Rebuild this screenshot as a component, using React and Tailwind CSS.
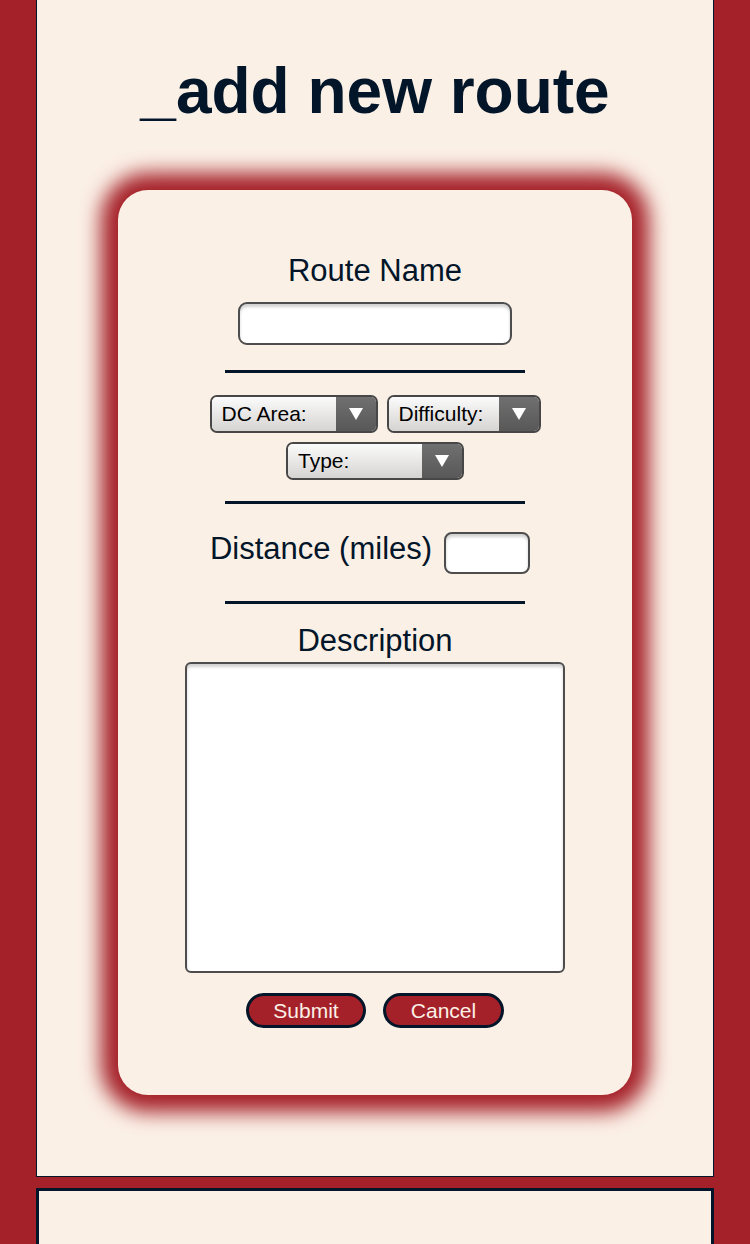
import React from 'react';

const font = { fontFamily: '"Liberation Sans", Arial, sans-serif' };

function Divider() {
  return <div className="w-[300px] h-[3px] bg-[#021529] mx-auto" />;
}

function FakeSelect({ label, width }) {
  return (
    <div
      className={`flex h-[38px] rounded-[7px] border-2 border-[#474747] overflow-hidden ${width}`}
    >
      <div className="flex-1 flex items-center pl-[10px] text-[21px] text-black bg-gradient-to-b from-[#fbfbfb] to-[#d6d4d2]">
        {label}
      </div>
      <div className="w-[40px] flex items-center justify-center bg-gradient-to-b from-[#707070] to-[#585858]">
        <svg width="14" height="12" viewBox="0 0 14 12">
          <path d="M0 0 L14 0 L7 12 Z" fill="#fff" />
        </svg>
      </div>
    </div>
  );
}

export default function App() {
  return (
    <div className="min-h-screen bg-[#a52129] px-[36px]" style={font}>
      <div className="bg-[#fbf0e6] border-x border-b border-[#021529] h-[1177px] pt-[55px]">
        <h1 className="text-center text-[64px] leading-[72px] font-bold text-[#021529]">
          _add new route
        </h1>

        <div className="mt-[63px] mx-auto w-[514px] h-[905px] rounded-[30px] bg-[#fbf0e6] shadow-[0_0_20px_17px_#a52129] pt-[62px] text-[#021529]">
          <div className="text-center text-[31px] leading-[38px]">Route Name</div>
          <div className="mt-[12px] flex justify-center">
            <div className="w-[274px] h-[43px] rounded-[9px] border-2 border-[#4d4d4d] bg-white shadow-[inset_0_3px_3px_rgba(0,0,0,0.18)]" />
          </div>

          <div className="mt-[25px]">
            <Divider />
          </div>

          <div className="mt-[22px] flex justify-center gap-[9px]">
            <FakeSelect label="DC Area:" width="w-[168px]" />
            <FakeSelect label="Difficulty:" width="w-[154px]" />
          </div>
          <div className="mt-[9px] flex justify-center">
            <FakeSelect label="Type:" width="w-[178px]" />
          </div>

          <div className="mt-[21px]">
            <Divider />
          </div>

          <div className="mt-[28px] flex justify-center items-center gap-[12px] pr-[10px]">
            <span className="text-[31px] leading-[38px] -mt-[8px]">Distance (miles)</span>
            <div className="w-[86px] h-[42px] rounded-[8px] border-2 border-[#4d4d4d] bg-white shadow-[inset_0_3px_3px_rgba(0,0,0,0.18)]" />
          </div>

          <div className="mt-[27px]">
            <Divider />
          </div>

          <div className="mt-[18px] text-center text-[31px] leading-[38px]">Description</div>
          <div className="mt-[2px] flex justify-center">
            <div className="w-[380px] h-[311px] rounded-[6px] border-2 border-[#4d4d4d] bg-white shadow-[inset_0_3px_3px_rgba(0,0,0,0.18)]" />
          </div>

          <div className="mt-[20px] flex justify-center gap-[17px]">
            <button className="w-[120px] h-[35px] rounded-full border-[3px] border-[#021529] bg-[#a52129] text-[#fbf0e6] text-[21px] leading-none">
              Submit
            </button>
            <button className="w-[121px] h-[35px] rounded-full border-[3px] border-[#021529] bg-[#a52129] text-[#fbf0e6] text-[21px] leading-none">
              Cancel
            </button>
          </div>
        </div>
      </div>

      <div className="mt-[11px] bg-[#fbf0e6] border-[3px] border-[#021529] h-[200px]" />
    </div>
  );
}
